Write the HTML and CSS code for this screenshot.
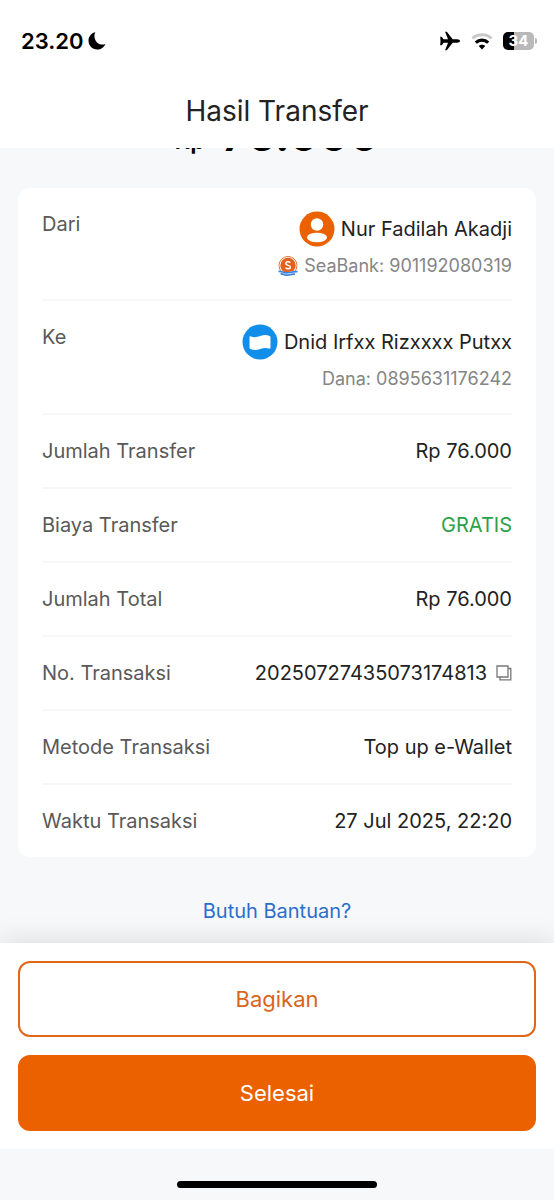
FILE: index.html
```
<!DOCTYPE html>
<html lang="id">
<head>
    <meta charset="UTF-8">
    <meta name="viewport" content="width=device-width, initial-scale=1.0">
    <title>Hasil Transfer</title>
    <link rel="stylesheet" href="styles.css">
</head>
<body>
    <header class="header">
        <div class="status-bar">
            <div class="status-left">
                <span class="time">23.20</span>
                <svg viewBox="0 0 18 18" width="18" height="18">
                    <path d="M6.200.6C2.700 2 .5 5.200.5 8.800c0 4.800 3.800 8.700 8.700 8.700 3.700 0 6.900-2.300 8.200-5.600-1 .4-2 .6-3.100.6-4.400 0-7.600-3.700-7.900-8.100C6.300 3.100 6.700 1.500 7.400.3z"/>
                </svg>
            </div>
            <div class="status-right">
                <svg viewBox="0 0 22 20" width="22" height="20">
                    <path d="M21 10c0-1-1.300-1.700-3-1.700h-4.300L8.200 1.300C7.900.9 7.600.8 7.200.8H6.100l2.900 7.500H4.600L2.700 5.800H1.200L1.500 10l-.3 4.200h1.500l1.900-2.500H9L6.100 19.200h1.100c.4 0 .7-.1 1-.5l5.500-7H18c1.700 0 3-.7 3-1.700z"/>
                </svg>
                <svg viewBox="0 0 22 17" width="22" height="17">
                    <path d="M1.500 5.500C6.700.5 15.300.5 20.500 5.500" fill="none" stroke="#c9c9c9" stroke-width="3"/>
                    <path d="M4.800 9.600C8.400 6.200 13.600 6.200 17.200 9.600" fill="none" stroke="#000" stroke-width="3.200"/>
                    <path d="M11 16.500L7.700 13c1.800-1.800 4.800-1.800 6.600 0z"/>
                </svg>
                <div class="battery"><span>34</span></div>
            </div>
        </div>
        <h1>Hasil Transfer</h1>
    </header>

    <main class="content">
        <div class="amount"><small>Rp</small><span>76.000</span></div>

        <dl class="card">
            <div class="row row-top">
                <dt>Dari</dt>
                <dd>
                    <div class="person">
                        <svg viewBox="0 0 36 36" width="36" height="36">
                            <circle cx="18" cy="18" r="17.500" fill="#eb6100"/>
                            <circle cx="18" cy="13.500" r="6.200" fill="#fff"/>
                            <ellipse cx="18" cy="26.500" rx="10" ry="4.800" fill="#fff"/>
                        </svg>
                        <span>Nur Fadilah Akadji</span>
                    </div>
                    <div class="account">
                        <svg viewBox="0 0 20 20" width="20" height="20">
                            <circle cx="10" cy="9.500" r="9" fill="none" stroke="#e87030" stroke-width="1"/>
                            <circle cx="10" cy="9.500" r="7.700" fill="#e4601c"/>
                            <path d="M12.300 6.700C11 5.400 7.800 5.400 7.800 7.500c0 2.200 4.600 1.500 4.600 3.700 0 2-3.300 2.100-4.900.7" fill="none" stroke="#fff" stroke-width="1.500"/>
                            <path d="M.5 15c3-.8 4.500 1.200 8 1.200S14 14.600 19.500 15.200L17 20c-3.500-1-6 .4-8.500.2S4.500 18 2.500 18.300z" fill="#fff"/>
                            <path d="M.5 15.500c3-.8 4.500 1.300 8 1.300s6-1.700 11-1.200M2.500 18c2.500-.6 3.500 1.200 6.500 1.200s4-1.500 8-1" fill="none" stroke="#3f83df" stroke-width="1.700"/>
                        </svg>
                        <span>SeaBank: 901192080319</span>
                    </div>
                </dd>
            </div>
            <div class="row row-top">
                <dt>Ke</dt>
                <dd>
                    <div class="person">
                        <svg viewBox="0 0 36 36" width="36" height="36">
                            <circle cx="18" cy="18" r="17.500" fill="#118eea"/>
                            <path d="M7.500 13.500c0-1 .7-1.400 1.700-1 3 1.200 5.800.8 9-.4 3.400-1.200 6.500-1.400 9.300-.2.800.3 1 .8 1 1.500v10.200c0 1-.6 1.300-1.500 1-3-1-5.700-.7-8.800.4-3.400 1.200-6.600 1.400-9.700.1-.7-.3-1-.8-1-1.500z" fill="#fff"/>
                        </svg>
                        <span>Dnid Irfxx Rizxxxx Putxx</span>
                    </div>
                    <div class="account"><span>Dana: 0895631176242</span></div>
                </dd>
            </div>
            <div class="row">
                <dt>Jumlah Transfer</dt>
                <dd>Rp 76.000</dd>
            </div>
            <div class="row">
                <dt>Biaya Transfer</dt>
                <dd class="free">GRATIS</dd>
            </div>
            <div class="row">
                <dt>Jumlah Total</dt>
                <dd>Rp 76.000</dd>
            </div>
            <div class="row">
                <dt>No. Transaksi</dt>
                <dd class="number">
                    <span>20250727435073174813</span>
                    <button class="copy" type="button" aria-label="Salin">
                        <svg viewBox="0 0 16 16" width="16" height="16" fill="none" stroke="#777" stroke-width="1.300">
                            <path d="M1 1h11v11H1zM12 3.500h2.800v11.300H4V12"/>
                        </svg>
                    </button>
                </dd>
            </div>
            <div class="row">
                <dt>Metode Transaksi</dt>
                <dd>Top up e-Wallet</dd>
            </div>
            <div class="row">
                <dt>Waktu Transaksi</dt>
                <dd>27 Jul 2025, 22:20</dd>
            </div>
        </dl>

        <a class="help" href="#">Butuh Bantuan?</a>
    </main>

    <footer class="actions">
        <button class="btn btn-outline" type="button">Bagikan</button>
        <button class="btn btn-primary" type="button">Selesai</button>
    </footer>
    <div class="home-bar"><span></span></div>
</body>
</html>
```
FILE: styles.css
```
* {
    margin: 0;
    padding: 0;
    box-sizing: border-box;
}

body {
    display: flex;
    flex-direction: column;
    min-height: 100vh;
    background: #f7f8fa;
    color: #222;
    font-family: Inter, "Liberation Sans", sans-serif;
    font-size: 20px;
    line-height: 24px;
}

svg {
    display: block;
    flex: none;
}

button {
    font: inherit;
    cursor: pointer;
}

/* header */
.header {
    background: #fff;
    padding-bottom: 20px;
}

.status-bar {
    display: flex;
    justify-content: space-between;
    align-items: center;
    height: 82px;
    padding: 0 17px 0 21px;
}

.status-left,
.status-right {
    display: flex;
    align-items: center;
}

.status-left {
    gap: 5px;
    color: #000;
    font-size: 22px;
    font-weight: 600;
}

.status-right {
    gap: 10px;
}

.battery {
    position: relative;
    width: 31px;
    height: 18px;
    margin-right: 3px;
    border-radius: 5px;
    background: linear-gradient(to right, #000 35%, #b9b9b9 35%);
    color: #fff;
    font-size: 15px;
    font-weight: 700;
    line-height: 18px;
    text-align: center;
}

.battery::after {
    content: "";
    position: absolute;
    top: 6px;
    right: -3px;
    width: 2px;
    height: 6px;
    border-radius: 0 2px 2px 0;
    background: #b9b9b9;
}

h1 {
    padding-top: 12px;
    font-size: 28px;
    font-weight: 400;
    line-height: 34px;
    text-align: center;
}

/* details */
.content {
    flex: 1;
    overflow: hidden;
    padding: 0 18px;
}

/* scrolled under the header, only the feet of the digits stay visible */
.amount {
    display: flex;
    justify-content: center;
    align-items: flex-end;
    gap: 16px;
    height: 40px;
    margin-top: -40px;
    margin-bottom: 40px;
    color: #000;
    font-size: 46px;
    font-weight: 600;
    line-height: 28px;
}

.amount small {
    font-size: 24px;
    line-height: 14px;
}

.card {
    padding: 0 24px;
    border-radius: 12px;
    background: #fff;
}

.row {
    display: flex;
    justify-content: space-between;
    align-items: center;
    min-height: 74px;
    border-bottom: 2px solid #f7f7f8;
}

.row:last-child {
    min-height: 72px;
    border-bottom: 0;
}

.row-top {
    align-items: flex-start;
    min-height: 114px;
    padding-top: 24px;
}

.row-top:first-child {
    min-height: 113px;
}

.row dt {
    color: #595959;
}

.row dd {
    text-align: right;
}

.person {
    display: flex;
    justify-content: flex-end;
    align-items: center;
    gap: 6px;
    height: 34px;
}

.account {
    display: flex;
    justify-content: flex-end;
    align-items: center;
    gap: 6px;
    padding-top: 8px;
    color: #858585;
    font-size: 18px;
}

.row .free {
    color: #2ba245;
}

.number {
    display: flex;
    align-items: center;
    gap: 9px;
}

.copy {
    border: 0;
    background: none;
}

.help {
    display: block;
    width: max-content;
    margin: 42px auto 20px;
    color: #2b6fcb;
    text-decoration: none;
}

/* bottom buttons */
.actions {
    display: flex;
    flex-direction: column;
    gap: 18px;
    padding: 18px;
    background: #fff;
    box-shadow: 0 -4px 24px rgba(0, 0, 0, 0.1);
    clip-path: inset(-40px 0 0);
}

.btn {
    height: 76px;
    border: 2px solid #e0661c;
    border-radius: 12px;
    font-size: 22px;
}

.btn-outline {
    background: #fff;
    color: #d9641c;
}

.btn-primary {
    border-color: #eb6100;
    background: #eb6100;
    color: #fff;
}

.home-bar {
    display: flex;
    justify-content: center;
    align-items: flex-end;
    height: 51px;
    padding-bottom: 12px;
}

.home-bar span {
    width: 36%;
    height: 7px;
    border-radius: 4px;
    background: #000;
}
```
